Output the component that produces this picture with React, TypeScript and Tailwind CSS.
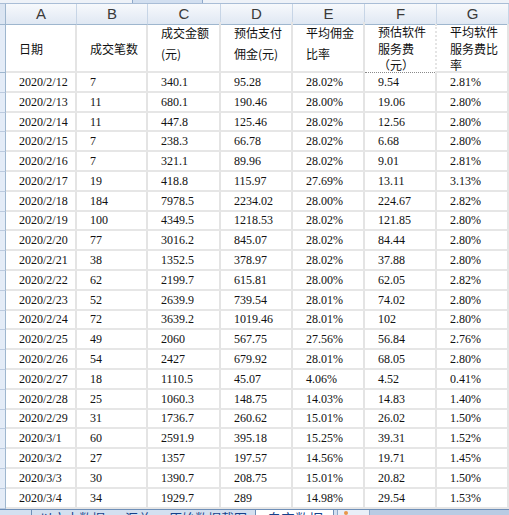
import React from 'react';

const cols = ['A', 'B', 'C', 'D', 'E', 'F', 'G'];

const rows = [
  ['2020/2/12', '7', '340.1', '95.28', '28.02%', '9.54', '2.81%'],
  ['2020/2/13', '11', '680.1', '190.46', '28.00%', '19.06', '2.80%'],
  ['2020/2/14', '11', '447.8', '125.46', '28.02%', '12.56', '2.80%'],
  ['2020/2/15', '7', '238.3', '66.78', '28.02%', '6.68', '2.80%'],
  ['2020/2/16', '7', '321.1', '89.96', '28.02%', '9.01', '2.81%'],
  ['2020/2/17', '19', '418.8', '115.97', '27.69%', '13.11', '3.13%'],
  ['2020/2/18', '184', '7978.5', '2234.02', '28.00%', '224.67', '2.82%'],
  ['2020/2/19', '100', '4349.5', '1218.53', '28.02%', '121.85', '2.80%'],
  ['2020/2/20', '77', '3016.2', '845.07', '28.02%', '84.44', '2.80%'],
  ['2020/2/21', '38', '1352.5', '378.97', '28.02%', '37.88', '2.80%'],
  ['2020/2/22', '62', '2199.7', '615.81', '28.00%', '62.05', '2.82%'],
  ['2020/2/23', '52', '2639.9', '739.54', '28.01%', '74.02', '2.80%'],
  ['2020/2/24', '72', '3639.2', '1019.46', '28.01%', '102', '2.80%'],
  ['2020/2/25', '49', '2060', '567.75', '27.56%', '56.84', '2.76%'],
  ['2020/2/26', '54', '2427', '679.92', '28.01%', '68.05', '2.80%'],
  ['2020/2/27', '18', '1110.5', '45.07', '4.06%', '4.52', '0.41%'],
  ['2020/2/28', '25', '1060.3', '148.75', '14.03%', '14.83', '1.40%'],
  ['2020/2/29', '31', '1736.7', '260.62', '15.01%', '26.02', '1.50%'],
  ['2020/3/1', '60', '2591.9', '395.18', '15.25%', '39.31', '1.52%'],
  ['2020/3/2', '27', '1357', '197.57', '14.56%', '19.71', '1.45%'],
  ['2020/3/3', '30', '1390.7', '208.75', '15.01%', '20.82', '1.50%'],
  ['2020/3/4', '34', '1929.7', '289', '14.98%', '29.54', '1.53%'],
];

// header labels, split into the lines Excel wraps them to
const headers = [
  ['日期'],
  ['成交笔数'],
  ['成交金额', '(元)'],
  ['预估支付', '佣金(元)'],
  ['平均佣金', '比率'],
  ['预估软件', '服务费', '（元）'],
  ['平均软件', '服务费比', '率'],
];

export default function App() {
  return (
    <div className="w-[509px] h-[515px] overflow-hidden bg-white flex flex-col font-['Liberation_Serif',serif] text-[12px] text-[#111]">
      {/* edge of the ribbon above */}
      <div className="h-[4px] shrink-0 flex bg-[#eef2f8] border-b border-[#a9bdd6]">
        <div className="ml-[132px] w-[71px] bg-[#d2dff0] border-x border-[#8fa9ca]" />
      </div>

      <div className="grid shrink-0 grid-cols-[6px_71px_71px_73px_72px_72px_72px_72px] grid-rows-[21px_48px_repeat(22,19.8px)]">
        {/* column letters */}
        <div className="bg-[#dbe5f2] border-r border-b border-[#9eb6ce]" />
        {cols.map((c) => (
          <div
            key={c}
            className="flex items-center justify-center bg-gradient-to-b from-[#f7f9fc] to-[#e0e8f3] border-r border-b border-r-[#c7d5e6] border-b-[#9eb6ce] font-['Liberation_Sans',sans-serif] text-[15px] text-[#3a3a3a]"
          >
            {c}
          </div>
        ))}

        {/* header labels */}
        <div className="bg-[#e4ecf7] border-r border-b border-[#9eb6ce]" />
        {headers.map((lines, i) => (
          <div
            key={i}
            className={
              'pl-[13px] border-r-2 border-r-[#e4e4e4] font-["Noto_Sans_CJK_SC",sans-serif] text-[12px] text-[#111] ' +
              (i === 5 ? 'border-b border-dotted border-b-[#8a8a8a] ' : 'border-b-2 border-b-[#e6e6e6] ') +
              (lines.length === 1
                ? 'flex items-center pt-[2px]'
                : lines.length === 2
                  ? 'flex flex-col leading-[21px] -mt-[3px]'
                  : 'flex flex-col leading-[16.5px] -mt-[1px]')
            }
          >
            {lines.map((l) => (
              <span key={l} className="whitespace-nowrap">
                {l}
              </span>
            ))}
          </div>
        ))}

        {/* data */}
        {rows.map((r) => (
          <React.Fragment key={r[0]}>
            <div className="bg-[#e4ecf7] border-r border-b border-r-[#9eb6ce] border-b-[#bccbdf]" />
            {r.map((v, j) => (
              <div
                key={j}
                className="flex items-center pl-[13px] border-r-2 border-b-2 border-r-[#e4e4e4] border-b-[#e6e6e6] whitespace-nowrap"
              >
                {v}
              </div>
            ))}
          </React.Fragment>
        ))}
      </div>

      {/* sheet tabs, mostly cut off */}
      <div className="flex-1 flex overflow-hidden bg-[#d3e0f0] border-t border-[#6f8fb8] font-['Noto_Sans_CJK_SC',sans-serif] text-[13px] leading-[14px] text-[#15428b]">
        <div className="w-[32px] shrink-0 border-r border-[#6f8fb8]" />
        <span className="ml-[8px] mt-[1px] whitespace-nowrap">以文本数据</span>
        <span className="ml-[20px] mt-[1px] whitespace-nowrap">汇总</span>
        <span className="ml-[18px] mt-[1px] whitespace-nowrap">原始数据截图</span>
        <div className="ml-[8px] w-[79px] shrink-0 flex bg-white border-x border-[#6f8fb8]">
          <span className="ml-[11px] mt-[1px] text-[14px] whitespace-nowrap">自定数据</span>
        </div>
        <div className="ml-[3px] w-[33px] shrink-0 flex bg-[#e9eff8] border-x border-[#8fa9ca]">
          <div className="ml-[6px] mt-[1px] w-[4px] h-[4px] rounded-full bg-[#e8964a]" />
        </div>
        <div className="flex-1 bg-[#b9cbe3]" />
      </div>
    </div>
  );
}
